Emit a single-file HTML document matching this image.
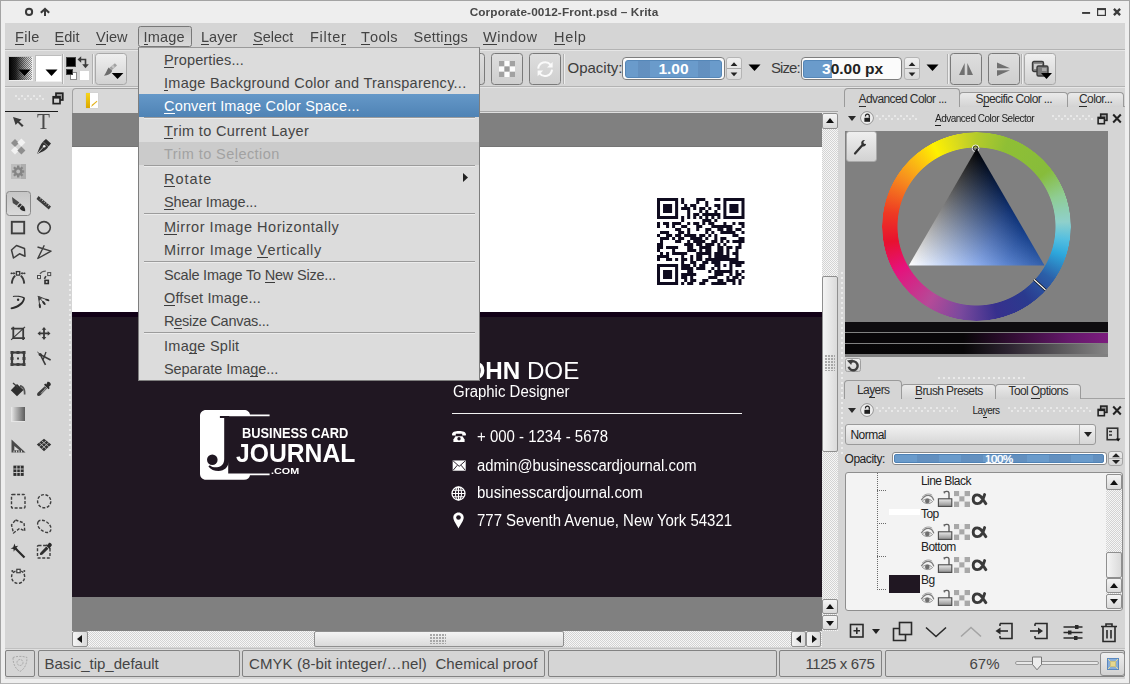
<!DOCTYPE html>
<html>
<head>
<meta charset="utf-8">
<title>Krita</title>
<style>
*{box-sizing:border-box;margin:0;padding:0}
html,body{width:1130px;height:684px;overflow:hidden;background:#eeeeee}
body{font-family:"Liberation Sans",sans-serif;font-size:14.5px;color:#3a3a3a;position:relative}
.a{position:absolute}
#win{position:absolute;left:0;top:0;width:1130px;height:684px;background:#eeeeee;border:1px solid #a3a3a3;border-bottom-color:#b5b5b5}
#main{position:absolute;left:5px;top:23px;width:1120px;height:656px;background:#d5d5d5}
.title{position:absolute;left:-1px;top:5px;width:1130px;text-align:center;font-weight:bold;font-size:11.8px;color:#484848;letter-spacing:0.12px;will-change:transform}
.mi{position:absolute;top:28px;height:18px;line-height:18px;font-size:14.5px;color:#444;white-space:nowrap}
u{text-decoration:none;border-bottom:1px solid #3c3c3c;display:inline-block;line-height:14px}
.hl{position:absolute;left:5px;width:1120px;height:1px}
.btn{position:absolute;border:1px solid #7a7a7a;border-radius:3.5px;background:linear-gradient(#dedede,#cfcfcf)}
.btn.lt{border-color:#a9a9a9;background:linear-gradient(#efefef,#d2d2d2)}
.pm{position:absolute;left:164px;height:23px;line-height:25px;font-size:14.5px;color:#3a3a3a;white-space:nowrap}
.sep{position:absolute;left:144px;width:331px;height:2px;border-top:1px solid #9c9c9c;border-bottom:1px solid #ececec}
.sbox{position:absolute;top:650px;height:27px;border:1px solid #828282;border-radius:2px;font-size:15px;line-height:25px;color:#444;white-space:nowrap}
.tab{position:absolute;font-size:12px;color:#2e2e2e;white-space:nowrap;letter-spacing:-0.6px}
.tabbox{position:absolute;border:1px solid #9a9a9a;border-bottom:none;border-radius:4px 4px 0 0;background:linear-gradient(#eaeaea,#d3d3d3)}
.tabbox.act{background:#d5d5d5;border-color:#9a9a9a}
.sb{position:absolute;border:1px solid #8f8f8f;border-radius:2px;background:linear-gradient(90deg,#f4f4f4,#dadada)}
.sbh{position:absolute;border:1px solid #8f8f8f;border-radius:2px;background:linear-gradient(#f4f4f4,#dadada)}
.track{position:absolute;background-color:#f6f6f6;background-image:linear-gradient(45deg,#d3d3d3 25%,transparent 25%,transparent 75%,#d3d3d3 75%),linear-gradient(45deg,#d3d3d3 25%,transparent 25%,transparent 75%,#d3d3d3 75%);background-size:2px 2px;background-position:0 0,1px 1px}
.card{font-family:"Liberation Sans",sans-serif;color:#fff;position:absolute;white-space:nowrap}
.lname{position:absolute;left:921px;font-size:12px;color:#222;letter-spacing:-0.55px;white-space:nowrap}
</style>
</head>
<body>
<div id="win"></div>
<div id="main"></div>

<!-- TITLE BAR -->
<div class="title">Corporate-0012-Front.psd – Krita</div>
<svg class="a" style="left:22px;top:6px" width="30" height="12" viewBox="0 0 30 12"><circle cx="7.05" cy="5.95" r="3.1" fill="none" stroke="#3a3a3a" stroke-width="2"/><path d="M23 10V3.2" fill="none" stroke="#3a3a3a" stroke-width="2"/><path d="M19.6 6L23 2.9L26.4 6" fill="none" stroke="#3a3a3a" stroke-width="2.1" stroke-linecap="square"/></svg>
<svg class="a" style="left:1080px;top:6px" width="44" height="12" viewBox="0 0 44 12"><rect x="2.1" y="6" width="8" height="1.9" fill="#3a3a3a"/><rect x="17.6" y="3" width="7.8" height="6.4" fill="none" stroke="#3a3a3a" stroke-width="1.2"/><rect x="17" y="2.1" width="9" height="2" fill="#3a3a3a"/><path d="M33.9 2.9L40.1 9.1M40.1 2.9L33.9 9.1" stroke="#3a3a3a" stroke-width="2.3"/></svg>

<!-- MENUBAR -->
<div class="btn" style="left:138px;top:26px;width:54px;height:21px;border-radius:2.5px;border-color:#787878;background:linear-gradient(#c6c6c6,#d9d9d9)"></div>
<div class="mi" style="left:15px;letter-spacing:0.3px"><u>F</u>ile</div>
<div class="mi" style="left:54.5px"><u>E</u>dit</div>
<div class="mi" style="left:96px"><u>V</u>iew</div>
<div class="mi" style="left:143.6px;letter-spacing:0.15px"><u>I</u>mage</div>
<div class="mi" style="left:201px"><u>L</u>ayer</div>
<div class="mi" style="left:253px"><u>S</u>elect</div>
<div class="mi" style="left:310px;letter-spacing:0.7px">Filte<u>r</u></div>
<div class="mi" style="left:361px;letter-spacing:0.25px"><u>T</u>ools</div>
<div class="mi" style="left:413.5px;letter-spacing:0.27px">Setti<u>n</u>gs</div>
<div class="mi" style="left:483px;letter-spacing:0.5px"><u>W</u>indow</div>
<div class="mi" style="left:554px;letter-spacing:0.7px"><u>H</u>elp</div>
<div class="hl" style="top:49px;background:#b3b3b3"></div>
<div class="hl" style="top:50px;background:#e6e6e6"></div>

<!-- TOOLBAR -->
<div id="toolbar">
<!-- gradient swatch -->
<div class="a" style="left:8px;top:56px;width:25px;height:25px;border:1px solid #c4c4c4;border-bottom-color:#eee;border-right-color:#eee"></div>
<div class="a" style="left:9px;top:57px;width:23px;height:23px;background-color:#fff;background-image:linear-gradient(45deg,#9a9a9a 25%,transparent 25%,transparent 75%,#9a9a9a 75%),linear-gradient(45deg,#9a9a9a 25%,transparent 25%,transparent 75%,#9a9a9a 75%);background-size:2px 2px;background-position:0 0,1px 1px"></div>
<div class="a" style="left:9px;top:57px;width:23px;height:23px;background:linear-gradient(90deg,#000 0%,rgba(0,0,0,.85) 30%,rgba(0,0,0,.35) 70%,rgba(0,0,0,0.05) 100%)"></div>
<svg class="a" style="left:18px;top:69px" width="13" height="8"><path d="M0.5 0.5H12.5L6.5 7z" fill="#000"/></svg>
<!-- white swatch -->
<div class="a" style="left:35px;top:55px;width:27px;height:27px;border:1px solid #bdbdbd;border-bottom-color:#eee;border-right-color:#eee;background:#fff"></div>
<svg class="a" style="left:45px;top:69px" width="13" height="8"><path d="M0.5 0.5H12.5L6.5 7z" fill="#000"/></svg>
<div class="a" style="left:62px;top:54px;width:2px;height:30px;border-left:1px solid #b0b0b0;border-right:1px solid #ededed"></div>
<!-- fg/bg -->
<div class="a" style="left:79.3px;top:70.4px;width:11.2px;height:10.8px;background:#fff;border:1px solid #d4d4d4"></div>
<div class="a" style="left:65.6px;top:57px;width:10.7px;height:10.4px;background:#000;border:1px solid #444"></div>
<div class="a" style="left:69.5px;top:72px;width:7px;height:7.5px;background:#fff;border:1px solid #8a8a8a"></div>
<div class="a" style="left:66px;top:68.6px;width:6.6px;height:6.9px;background:#000;border:1px solid #444"></div>
<svg class="a" style="left:77px;top:55px" width="14" height="14" viewBox="0 0 14 14"><path d="M3 4.5H8.5V10" fill="none" stroke="#3a3a3a" stroke-width="1.6"/><path d="M0.5 4.5L4.2 1.2V7.8z" fill="#3a3a3a"/><path d="M8.5 13.2L5.2 9.3H11.8z" fill="#3a3a3a"/></svg>
<div class="a" style="left:92px;top:54px;width:2px;height:30px;border-left:1px solid #b0b0b0;border-right:1px solid #ededed"></div>
<!-- brush preset button -->
<div class="btn lt" style="left:95px;top:53px;width:32px;height:32px"></div>
<svg class="a" style="left:102px;top:62px" width="24" height="18" viewBox="0 0 24 18"><path d="M8.6 7L14 2.4" stroke="#a2a2a2" stroke-width="3.2"/><path d="M10.2 5.6L12 4.1" stroke="#c4c4c4" stroke-width="3.2"/><path d="M6.6 5.6L10.2 8.8C9.2 11.8 6 13.6 2 13.8C4 11.6 4.8 8 6.6 5.6z" fill="#6c6c6c"/><path d="M9.7 10.9H21.4L15.55 17.1z" fill="#000"/></svg>
<!-- hidden button edge -->
<div class="btn" style="left:454px;top:53px;width:31px;height:32px"></div>
<!-- checker btn -->
<div class="btn" style="left:491px;top:53px;width:32px;height:32px"></div>
<svg class="a" style="left:499px;top:61px" width="16" height="16" viewBox="0 0 16 16"><rect width="16" height="16" fill="#fdfdfd"/><g fill="#a2a2a2"><rect x="0" y="0" width="5.33" height="5.33"/><rect x="10.67" y="0" width="5.33" height="5.33"/><rect x="5.33" y="5.33" width="5.34" height="5.34" fill="#9c9c9c"/><rect x="0" y="10.67" width="5.33" height="5.33"/><rect x="10.67" y="10.67" width="5.33" height="5.33"/></g></svg>
<!-- reload btn -->
<div class="btn" style="left:529px;top:53px;width:32px;height:32px"></div>
<svg class="a" style="left:536px;top:60px" width="18" height="18" viewBox="0 0 18 18"><path d="M2.2 8.6A7 7 0 0 1 14.6 4.8" fill="none" stroke="#fafafa" stroke-width="2"/><path d="M16 9.6A7 7 0 0 1 3.6 13.4" fill="none" stroke="#fafafa" stroke-width="2"/><path d="M16.6 2V7.6H11z" fill="#fafafa"/><path d="M1.6 16.2V10.6H7.2z" fill="#fafafa"/></svg>
<div class="a" style="left:563px;top:54px;width:2px;height:30px;border-left:1px solid #b0b0b0;border-right:1px solid #ededed"></div>
<!-- opacity -->
<div class="a" style="left:567.5px;top:59px;font-size:15px;line-height:18px;color:#3c3c3c;white-space:nowrap" id="oplab">Opacity:</div>
<div class="a" style="left:622px;top:57px;width:103px;height:23px;border:1px solid #7e7e7e;border-radius:4px;background:#fbfbfb"></div>
<div class="a" style="left:625px;top:60px;width:97px;height:18px;border-radius:3px;background:#6a9bcb;border:1px solid #5587b8;background-image:linear-gradient(90deg,rgba(255,255,255,0) 0 12px,rgba(0,0,40,.07) 12px 24px,rgba(255,255,255,0) 24px 72px,rgba(0,0,40,.07) 72px 84px,rgba(255,255,255,0) 84px)"></div>
<div class="a" style="left:625px;top:60px;width:97px;height:18px;line-height:18px;text-align:center;color:#fff;font-weight:bold;font-size:15.5px">1.00</div>
<div class="a" style="left:726px;top:57px;width:16px;height:23px;border:1px solid #b4b4b4;border-radius:3px;background:linear-gradient(#efefef,#dadada)"></div>
<div class="a" style="left:727px;top:68px;width:14px;height:1px;background:#a8a8a8"></div>
<svg class="a" style="left:729px;top:60px" width="10" height="18" viewBox="0 0 10 18"><path d="M1.6 6L5 2.2L8.4 6z" fill="#222"/><path d="M1.6 12.4L5 16.2L8.4 12.4z" fill="#222"/></svg>
<svg class="a" style="left:748px;top:64px" width="13" height="8"><path d="M0.5 0.5H12.5L6.5 7z" fill="#000"/></svg>
<!-- size -->
<div class="a" style="left:771px;top:59px;font-size:15px;line-height:18px;color:#3c3c3c;white-space:nowrap;letter-spacing:-0.95px" id="szlab">Size:</div>
<div class="a" style="left:800.5px;top:57px;width:101.5px;height:23px;border:1px solid #7e7e7e;border-radius:4px;background:#fbfbfb"></div>
<div class="a" style="left:803px;top:60px;width:29px;height:18px;border-radius:3px 0 0 3px;background:#6a9bcb;border:1px solid #5587b8;border-right:none"></div>
<div class="a" style="left:822px;top:60px;width:70px;height:18px;line-height:18px;color:#222;font-weight:bold;font-size:15.5px;white-space:nowrap"><span style="color:#fff">3</span>0.00 px</div>
<div class="a" style="left:904px;top:57px;width:16px;height:23px;border:1px solid #b4b4b4;border-radius:3px;background:linear-gradient(#efefef,#dadada)"></div>
<div class="a" style="left:905px;top:68px;width:14px;height:1px;background:#a8a8a8"></div>
<svg class="a" style="left:907px;top:60px" width="10" height="18" viewBox="0 0 10 18"><path d="M1.6 6L5 2.2L8.4 6z" fill="#222"/><path d="M1.6 12.4L5 16.2L8.4 12.4z" fill="#222"/></svg>
<svg class="a" style="left:926px;top:64px" width="13" height="8"><path d="M0.5 0.5H12.5L6.5 7z" fill="#000"/></svg>
<div class="a" style="left:947px;top:54px;width:2px;height:30px;border-left:1px solid #b0b0b0;border-right:1px solid #ededed"></div>
<!-- mirror buttons -->
<div class="btn" style="left:950px;top:53px;width:32px;height:32px"></div>
<svg class="a" style="left:958px;top:62px" width="16" height="14" viewBox="0 0 16 14"><path d="M1 13L6.7 13L6.7 1z" fill="#707070"/><path d="M15 13L9.3 13L9.3 1z" fill="#707070"/></svg>
<div class="btn" style="left:988px;top:53px;width:32px;height:32px"></div>
<svg class="a" style="left:996px;top:62px" width="15" height="15" viewBox="0 0 15 15"><path d="M1 0.5L14 6.3L1 6.3z" fill="#707070"/><path d="M1 14L14 8.3L1 8.3z" fill="#707070"/></svg>
<div class="a" style="left:1021px;top:54px;width:2px;height:30px;border-left:1px solid #b0b0b0;border-right:1px solid #ededed"></div>
<div class="btn lt" style="left:1024px;top:53px;width:32px;height:32px"></div>
<svg class="a" style="left:1031px;top:60px" width="22" height="20" viewBox="0 0 22 20"><rect x="1.5" y="1.5" width="11" height="10" rx="1.5" fill="#8a8a8a" stroke="#3c3c3c" stroke-width="1.4"/><rect x="3" y="4" width="8" height="5" fill="#cfcfcf"/><rect x="6" y="6" width="11" height="10" rx="1.5" fill="#7c7c7c" stroke="#3c3c3c" stroke-width="1.4"/><rect x="11" y="8" width="4.5" height="3" fill="#a9a9a9"/><path d="M10 13H21L15.5 19z" fill="#000"/></svg>
</div>
<div class="hl" style="top:86px;background:#b3b3b3"></div>
<div class="hl" style="top:87px;background:#e6e6e6"></div>

<!-- TOOLBOX -->
<div id="toolbox">
<div class="a" style="left:14.5px;top:95px;width:30px;height:6px;background-image:radial-gradient(circle at 1.1px 1.1px,#e8e8e8 .9px,transparent 1.25px),radial-gradient(circle at 1.1px 1.1px,#e8e8e8 .9px,transparent 1.25px);background-size:6px 6px;background-position:0 0,3px 3px"></div>
<svg class="a" style="left:52px;top:92px" width="12" height="13" viewBox="0 0 12 13"><rect x="4" y="1.2" width="6.8" height="6.8" fill="#9a9a9a" stroke="#222" stroke-width="1.7"/><rect x="1.2" y="4.8" width="6.8" height="6.8" fill="#d6d6d6" stroke="#222" stroke-width="1.7"/><rect x="1.2" y="5" width="6.8" height="1.6" fill="#222"/></svg>
<div class="a" style="left:5px;top:111px;width:53px;height:1px;background:#1a1a1a"></div>
<div class="a" style="left:68.5px;top:274px;width:2px;height:182px;background-image:linear-gradient(#f2f2f2 0 2px,transparent 2px 5px);background-size:2px 5px;opacity:.75"></div>
<svg class="a" style="left:12px;top:116px" width="13" height="12" viewBox="0 0 13 12"><path d="M1 1L9.6 3.4L7.2 5.4L11.6 9.4L10 11L5.8 6.8L3.6 9z" fill="#3a3a3a"/></svg>
<div class="a" style="left:37.3px;top:109px;font-family:'Liberation Serif',serif;font-size:23px;line-height:26px;color:#4a4a4a;transform-origin:0 0;transform:scaleX(.92)">T</div>
<svg class="a" style="left:10px;top:138px" width="16" height="17" viewBox="0 0 16 17"><path d="M5 1L9 5L5 9L1 5z" fill="#8e8e8e"/><path d="M11.4 0.6L15.4 4.6L11.4 8.6L7.4 4.6z" fill="#f2f2f2"/><path d="M5 8.4L9 12.4L5 16.4L1 12.4z" fill="#f2f2f2"/><path d="M11.4 8.4L15.4 12.4L11.4 16.4L7.4 12.4z" fill="#8e8e8e"/></svg>
<svg class="a" style="left:36px;top:138px" width="16" height="17" viewBox="0 0 16 17"><path d="M10 1L15 5.5L12.5 8.5L7 3.5z" fill="#2e2e2e"/><path d="M7 3.8L12.2 8.7C10.5 12 6 14.2 1 16C3 11 4.2 6.5 7 3.8z" fill="#333"/><circle cx="8.2" cy="8.3" r="1.3" fill="#eee"/><path d="M1.5 15.5L7.4 9.1" stroke="#eee" stroke-width=".8"/></svg>
<svg class="a" style="left:11px;top:164px" width="15" height="15" viewBox="0 0 15 15"><rect width="15" height="15" fill="#bebebe"/><rect x="10" width="5" height="15" fill="#aeaeae"/><g transform="translate(7.2 7.5)" fill="#858585"><circle r="4.3"/><g><rect x="-1.2" y="-6" width="2.4" height="12"/><rect x="-1.2" y="-6" width="2.4" height="12" transform="rotate(45)"/><rect x="-1.2" y="-6" width="2.4" height="12" transform="rotate(90)"/><rect x="-1.2" y="-6" width="2.4" height="12" transform="rotate(135)"/></g><circle r="1.9" fill="#bebebe"/></g></svg>
<div class="btn" style="left:6px;top:191px;width:25px;height:25px;border-color:#8a8a8a;background:linear-gradient(#c6c6c6,#dadada)"></div>
<svg class="a" style="left:11px;top:196px" width="15" height="16" viewBox="0 0 15 16"><path d="M1 1L1.8 7L5.6 9.6L8.4 6.6z" fill="#4a4a4a"/><path d="M6.2 10.2L9 7.2L10.8 8.8L8 11.8z" fill="#333"/><path d="M8.6 12.2L11.2 9.3C13.2 10.3 14.4 12.5 14.2 15.2C11.8 15.2 9.6 14.2 8.6 12.2z" fill="#2a2a2a"/></svg>
<svg class="a" style="left:36px;top:195px" width="16" height="16" viewBox="0 0 16 16"><path d="M2.5 1L15 11.5L12.8 14.5L0.5 4z" fill="#3a3a3a"/><path d="M4 4.5l1-1.3M6 6.2l1-1.3M8 7.9l1-1.3M10 9.6l1-1.3M12 11.3l1-1.3" stroke="#bbb" stroke-width=".9"/></svg>
<svg class="a" style="left:10px;top:220px" width="16" height="16" viewBox="0 0 16 16"><rect x="1.8" y="1.8" width="12.4" height="11.6" fill="none" stroke="#3e3e3e" stroke-width="1.9"/></svg>
<svg class="a" style="left:36px;top:220px" width="16" height="16" viewBox="0 0 16 16"><ellipse cx="8" cy="7.6" rx="6.3" ry="6" fill="none" stroke="#3e3e3e" stroke-width="1.6"/></svg>
<svg class="a" style="left:10px;top:244px" width="17" height="16" viewBox="0 0 17 16"><path d="M6.5 1.5L14.5 4.5L15 12.2L9.5 9.8L3.5 14L1.5 6z" fill="none" stroke="#3e3e3e" stroke-width="1.5" stroke-linejoin="round"/></svg>
<svg class="a" style="left:36px;top:244px" width="16" height="16" viewBox="0 0 16 16"><path d="M1.5 3L15 7.2L1.8 14.5L8.3 1.2" fill="none" stroke="#3e3e3e" stroke-width="1.4" stroke-linejoin="round"/></svg>
<svg class="a" style="left:10px;top:270px" width="16" height="15" viewBox="0 0 16 15"><path d="M1.8 13.6C2.1 10 3.2 7.4 5.2 5.8" fill="none" stroke="#3a3a3a" stroke-width="1.9"/><path d="M14.2 13.6C13.9 10 12.8 7.4 10.8 5.8" fill="none" stroke="#3a3a3a" stroke-width="1.9"/><rect x="6.4" y="1.6" width="3.3" height="3.5" fill="#dcdcdc" stroke="#3a3a3a" stroke-width="1.3"/><path d="M1.2 3.3H4" stroke="#3a3a3a" stroke-width="1"/><path d="M5.7 3.3L3.5 1.9V4.7z" fill="#3a3a3a"/><path d="M14.8 3.3H12" stroke="#3a3a3a" stroke-width="1"/><path d="M10.3 3.3L12.5 1.9V4.7z" fill="#3a3a3a"/><circle cx="1.4" cy="3.3" r=".9" fill="#3a3a3a"/><circle cx="14.6" cy="3.3" r=".9" fill="#3a3a3a"/></svg>
<svg class="a" style="left:36px;top:270px" width="16" height="15" viewBox="0 0 16 15"><path d="M4 3.8C5.4 1.9 7.4 1 9.8 1.1" fill="none" stroke="#5a5a5a" stroke-width="1.3"/><path d="M9.9 6.1L8.4 8.9" stroke="#3a3a3a" stroke-width="1.6"/><rect x="1.5" y="5.5" width="3" height="3.1" fill="#dedede" stroke="#4a4a4a" stroke-width="1"/><rect x="11.7" y="2.6" width="3" height="3" fill="#dedede" stroke="#4a4a4a" stroke-width="1"/><rect x="9" y="10.4" width="3.3" height="3.1" fill="#e8e8e8" stroke="#2e2e2e" stroke-width="1.6"/></svg>
<svg class="a" style="left:10px;top:295px" width="17" height="15" viewBox="0 0 17 15"><path d="M1 12.4C6 11.4 12.4 8.2 13.3 3.2C10.5 1.9 6.4 1.6 3 1.9L2.9 1C7 0.5 12 0.8 15 2.7C14.8 9 8 13.4 1.7 14.2C0.5 14.2 0.3 12.8 1 12.4z" fill="#2c2c2c"/><circle cx="8.1" cy="4.7" r="1.2" fill="#2c2c2c"/></svg>
<svg class="a" style="left:36px;top:295px" width="16" height="15" viewBox="0 0 16 15"><path d="M1.6 0.8L6.4 2.6L3 6z" fill="#3a3a3a"/><path d="M2.4 1.6L12.8 5.3M2.4 1.6L9 9.2M2.4 1.6L4 12.5" stroke="#4a4a4a" stroke-width="1"/><ellipse cx="11.3" cy="4.9" rx="2.2" ry="1" transform="rotate(20 11.3 4.9)" fill="#2c2c2c"/><ellipse cx="7.9" cy="8" rx="2.3" ry="1.05" transform="rotate(49 7.9 8)" fill="#2c2c2c"/><ellipse cx="3.8" cy="10.9" rx="2.4" ry="1.05" transform="rotate(82 3.8 10.9)" fill="#2c2c2c"/></svg>
<svg class="a" style="left:10px;top:325px" width="17" height="17" viewBox="0 0 17 17"><path d="M1.1 3.6H13.2V14.9M3.3 1.8V13.1H15" fill="none" stroke="#3a3a3a" stroke-width="1.8"/><path d="M15 1.8L1.1 14.9" stroke="#3a3a3a" stroke-width="1.1"/></svg>
<svg class="a" style="left:36px;top:326px" width="16" height="15" viewBox="0 0 16 15"><path d="M8 2.5V12.3M3.2 7.4H12.8" stroke="#3a3a3a" stroke-width="1.8"/><path d="M8 0.9L10.3 3.7H5.7zM8 13.9L10.3 11.1H5.7zM1.5 7.4L4.3 5.1V9.7zM14.5 7.4L11.7 5.1V9.7z" fill="#3a3a3a"/></svg>
<svg class="a" style="left:10px;top:350px" width="16" height="17" viewBox="0 0 16 17"><rect x="2" y="2.5" width="12" height="12" fill="none" stroke="#3e3e3e" stroke-width="2.2"/><g fill="#3e3e3e"><rect x="0.5" y="1" width="3" height="3"/><rect x="12.5" y="1" width="3" height="3"/><rect x="0.5" y="13" width="3" height="3"/><rect x="12.5" y="13" width="3" height="3"/><rect x="6.5" y="1" width="3" height="3"/><rect x="6.5" y="13" width="3" height="3"/><rect x="0.5" y="7" width="3" height="3"/><rect x="12.5" y="7" width="3" height="3"/><rect x="7" y="7.5" width="2" height="2"/></g></svg>
<svg class="a" style="left:36px;top:350px" width="16" height="16" viewBox="0 0 16 16"><path d="M1.4 2L4.2 4.5" stroke="#3a3a3a" stroke-width="1"/><path d="M4.2 4.5L14.6 10" stroke="#3a3a3a" stroke-width="1.6"/><path d="M4.2 4.5L9.5 14.8" stroke="#3a3a3a" stroke-width="1.6"/><path d="M10 2.1L7.2 9.4" stroke="#3a3a3a" stroke-width="1.3"/><circle cx="4.2" cy="4.5" r="1.6" fill="#3a3a3a"/></svg>
<svg class="a" style="left:10px;top:381px" width="17" height="16" viewBox="0 0 17 16"><path d="M7 3L13.5 9L7 15.2L0.8 9.2z" fill="#2e2e2e"/><path d="M3 2L8 6.5" stroke="#3e3e3e" stroke-width="1.3"/><path d="M10 4C14 4.5 15.8 8 15.5 13.5L13.8 13.5C14 9 13 6.8 10 6z" fill="#555"/></svg>
<svg class="a" style="left:36px;top:381px" width="16" height="16" viewBox="0 0 16 16"><path d="M11.5 0.8C13 0.2 15.2 2 14.8 4L12.8 6L13.8 7L12.5 8.3L8 3.8L9.3 2.5L10.3 3.5z" fill="#2a2a2a"/><path d="M8.8 5.2L11 7.4L4.5 14.2C3.5 15.2 1.5 15.2 1.2 14.2C0.8 13 1.5 12 2.3 11.3z" fill="#3c3c3c"/><path d="M8.5 6.8L9.5 7.8L5 12.5" stroke="#bbb" stroke-width="1" fill="none"/></svg>
<div class="a" style="left:11px;top:407.4px;width:14.2px;height:15px;background:linear-gradient(90deg,#ececec,#c4c4c4 25%,#5c5c5c);border-bottom:1px solid #e6e6e6"></div>
<svg class="a" style="left:10px;top:438px" width="17" height="16" viewBox="0 0 17 16"><path d="M1.5 1.5L15.5 14.5H1.5z" fill="#4a4a4a"/><path d="M4.3 8L9.5 12.2H4.3z" fill="#d6d6d6"/><path d="M4 14.5v-2M6.5 14.5v-2M9 14.5v-2M11.5 14.5v-2" stroke="#d6d6d6" stroke-width="1"/></svg>
<svg class="a" style="left:36px;top:438px" width="16" height="14" viewBox="0 0 16 14"><path d="M8 0.8L15.2 6.5L8 13.2L0.8 6.5z" fill="#333"/><path d="M5.6 2.7L12.8 8.7M3.2 4.6L10.4 11M10.4 2.7L3.2 8.7M12.8 4.6L5.6 11" stroke="#c8c8c8" stroke-width=".8"/></svg>
<svg class="a" style="left:12.5px;top:465px" width="11" height="12" viewBox="0 0 11 12"><rect x="0.4" y="0.6" width="10.3" height="10.3" fill="#2e2e2e"/><path d="M3.8 0.6v10.3M7.3 0.6v10.3M0.4 4h10.3M0.4 7.5h10.3" stroke="#cfcfcf" stroke-width=".9"/></svg>
<svg class="a" style="left:10px;top:493px" width="17" height="17" viewBox="0 0 17 17"><rect x="1.5" y="1.5" width="13.5" height="13.5" rx="1" fill="none" stroke="#3e3e3e" stroke-width="1.4" stroke-dasharray="3 1.6"/></svg>
<svg class="a" style="left:36px;top:493px" width="17" height="17" viewBox="0 0 17 17"><circle cx="8.2" cy="8.2" r="6.6" fill="none" stroke="#3e3e3e" stroke-width="1.4" stroke-dasharray="3 1.6"/></svg>
<svg class="a" style="left:10px;top:518px" width="17" height="17" viewBox="0 0 17 17"><path d="M5.5 2L14 5L14.8 13L9.5 10.5L3.5 15L1.5 7z" fill="none" stroke="#3e3e3e" stroke-width="1.4" stroke-dasharray="3 1.6" stroke-linejoin="round"/></svg>
<svg class="a" style="left:36px;top:518px" width="17" height="17" viewBox="0 0 17 17"><path d="M2 4C4 0.5 10 2.5 13 6C16.5 10 15 15 11 14.5C6 14 0 8.5 2 4z" fill="none" stroke="#3e3e3e" stroke-width="1.4" stroke-dasharray="3 1.6"/></svg>
<svg class="a" style="left:10px;top:543px" width="16" height="16" viewBox="0 0 16 16"><path d="M5.5 5.5L14.5 14.5" stroke="#2a2a2a" stroke-width="2.2"/><path d="M4.5 0.5L5.4 3.3L8.2 2.8L6.4 4.8L8 7L5.2 6.2L3.8 8.8L3.4 6L0.6 5.4L3.2 4.2z" fill="#2a2a2a"/></svg>
<svg class="a" style="left:36px;top:542px" width="17" height="18" viewBox="0 0 17 18"><rect x="1.5" y="3.5" width="12.5" height="12.5" rx="1" fill="none" stroke="#3e3e3e" stroke-width="1.4" stroke-dasharray="3 1.6"/><path d="M13 0.8C14.5 0.4 16.2 2 15.8 3.6L14 5.4L14.8 6.2L13.8 7.2L9.8 3.2L10.8 2.2L11.6 3z" fill="#2a2a2a"/><path d="M10.3 4.6L12.4 6.7L6.5 12.6C5.8 13.3 4.2 13.2 4 12.5C3.7 11.6 4.2 10.8 4.8 10.2z" fill="#2e2e2e"/></svg>
<svg class="a" style="left:10px;top:568px" width="17" height="17" viewBox="0 0 17 17"><path d="M5.5 3.2C2.5 4 1 7 1.8 10.5C2.6 14 6 16 9.5 15.2C13 14.4 15 11.5 14.6 8C14.3 5.5 13 4 11.2 3.2" fill="none" stroke="#3e3e3e" stroke-width="1.4" stroke-dasharray="3 1.6"/><rect x="6.8" y="1.3" width="3.4" height="3.4" fill="#e8e8e8" stroke="#3e3e3e" stroke-width="1.2"/><circle cx="2.3" cy="3" r="1" fill="#3e3e3e"/><circle cx="14.3" cy="3" r="1" fill="#3e3e3e"/></svg>
</div>

<!-- CANVAS -->
<div id="canvas">
<!-- doc tab -->
<div class="a" style="left:72px;top:88px;width:260px;height:25px;border:1px solid #a2a2a2;border-bottom:none;border-radius:4px 4px 0 0;background:#d8d8d8"></div>
<div class="a" style="left:332px;top:111px;width:506px;height:2px;background:#dedede;border-top:1px solid #a8a8a8"></div>
<div class="a" style="left:85.5px;top:92.5px;width:12.5px;height:15px;background:#fff;box-shadow:0 0 1px #bbb"></div>
<div class="a" style="left:85.5px;top:92.5px;width:4px;height:15px;background:linear-gradient(#f7d51c,#dba700)"></div>
<svg class="a" style="left:90px;top:100px" width="8" height="8"><path d="M1 7L2.2 4.6L6.8 0.8L7.4 1.6L3 5.6z" fill="#e3b21a"/></svg>
<!-- canvas bg -->
<div class="a" style="left:72px;top:113px;width:750px;height:518px;background:#808080"></div>
<div class="a" style="left:72px;top:146px;width:750px;height:1px;background:#757575"></div>
<div class="a" style="left:72px;top:147px;width:750px;height:165px;background:#fff"></div>
<div class="a" style="left:72px;top:312px;width:750px;height:285px;background:#201722"></div>
<div class="a" style="left:72px;top:312px;width:750px;height:4.8px;background:#110016"></div>
<!-- QR -->
<svg id="qr" class="a" style="left:657.2px;top:197.9px" width="87.5" height="86.9" viewBox="0 0 29 29" preserveAspectRatio="none"><path d="M0 0h7v1h-7zM8 0h1v1h-1zM13 0h3v1h-3zM19 0h2v1h-2zM22 0h7v1h-7zM0 1h1v1h-1zM6 1h1v1h-1zM8 1h1v1h-1zM13 1h1v1h-1zM16 1h1v1h-1zM22 1h1v1h-1zM28 1h1v1h-1zM0 2h1v1h-1zM2 2h3v1h-3zM6 2h1v1h-1zM9 2h1v1h-1zM11 2h2v1h-2zM16 2h1v1h-1zM19 2h2v1h-2zM22 2h1v1h-1zM24 2h3v1h-3zM28 2h1v1h-1zM0 3h1v1h-1zM2 3h3v1h-3zM6 3h1v1h-1zM8 3h3v1h-3zM12 3h1v1h-1zM14 3h2v1h-2zM17 3h1v1h-1zM20 3h1v1h-1zM22 3h1v1h-1zM24 3h3v1h-3zM28 3h1v1h-1zM0 4h1v1h-1zM2 4h3v1h-3zM6 4h1v1h-1zM10 4h1v1h-1zM14 4h1v1h-1zM16 4h1v1h-1zM19 4h1v1h-1zM22 4h1v1h-1zM24 4h3v1h-3zM28 4h1v1h-1zM0 5h1v1h-1zM6 5h1v1h-1zM10 5h1v1h-1zM12 5h2v1h-2zM15 5h6v1h-6zM22 5h1v1h-1zM28 5h1v1h-1zM0 6h7v1h-7zM8 6h1v1h-1zM10 6h1v1h-1zM12 6h1v1h-1zM14 6h1v1h-1zM16 6h1v1h-1zM18 6h1v1h-1zM20 6h1v1h-1zM22 6h7v1h-7zM8 7h1v1h-1zM15 7h3v1h-3zM19 7h1v1h-1zM0 8h1v1h-1zM2 8h2v1h-2zM5 8h3v1h-3zM10 8h1v1h-1zM12 8h2v1h-2zM15 8h1v1h-1zM17 8h2v1h-2zM22 8h1v1h-1zM25 8h1v1h-1zM27 8h2v1h-2zM0 9h1v1h-1zM3 9h1v1h-1zM5 9h1v1h-1zM8 9h2v1h-2zM13 9h2v1h-2zM18 9h7v1h-7zM28 9h1v1h-1zM6 10h2v1h-2zM10 10h1v1h-1zM13 10h1v1h-1zM16 10h2v1h-2zM20 10h2v1h-2zM23 10h2v1h-2zM26 10h2v1h-2zM1 11h3v1h-3zM7 11h2v1h-2zM10 11h1v1h-1zM16 11h1v1h-1zM18 11h1v1h-1zM21 11h5v1h-5zM28 11h1v1h-1zM0 12h1v1h-1zM3 12h2v1h-2zM6 12h2v1h-2zM9 12h4v1h-4zM14 12h2v1h-2zM17 12h1v1h-1zM19 12h1v1h-1zM25 12h2v1h-2zM1 13h3v1h-3zM5 13h1v1h-1zM7 13h2v1h-2zM11 13h4v1h-4zM16 13h1v1h-1zM19 13h1v1h-1zM21 13h2v1h-2zM27 13h2v1h-2zM1 14h1v1h-1zM6 14h2v1h-2zM10 14h1v1h-1zM12 14h4v1h-4zM18 14h2v1h-2zM21 14h1v1h-1zM23 14h1v1h-1zM25 14h4v1h-4zM0 15h2v1h-2zM9 15h3v1h-3zM13 15h2v1h-2zM16 15h3v1h-3zM20 15h1v1h-1zM22 15h1v1h-1zM27 15h1v1h-1zM0 16h2v1h-2zM3 16h4v1h-4zM10 16h2v1h-2zM14 16h4v1h-4zM20 16h2v1h-2zM23 16h2v1h-2zM26 16h2v1h-2zM0 17h1v1h-1zM5 17h1v1h-1zM10 17h3v1h-3zM14 17h1v1h-1zM16 17h2v1h-2zM20 17h2v1h-2zM23 17h1v1h-1zM26 17h1v1h-1zM1 18h1v1h-1zM3 18h1v1h-1zM5 18h5v1h-5zM13 18h5v1h-5zM19 18h3v1h-3zM23 18h1v1h-1zM25 18h2v1h-2zM0 19h4v1h-4zM8 19h1v1h-1zM11 19h1v1h-1zM13 19h2v1h-2zM17 19h1v1h-1zM19 19h5v1h-5zM26 19h1v1h-1zM0 20h1v1h-1zM3 20h2v1h-2zM6 20h1v1h-1zM8 20h2v1h-2zM11 20h1v1h-1zM13 20h2v1h-2zM16 20h11v1h-11zM8 21h1v1h-1zM11 21h2v1h-2zM15 21h2v1h-2zM18 21h3v1h-3zM24 21h5v1h-5zM0 22h7v1h-7zM8 22h3v1h-3zM12 22h1v1h-1zM14 22h2v1h-2zM19 22h2v1h-2zM22 22h1v1h-1zM24 22h1v1h-1zM26 22h2v1h-2zM0 23h1v1h-1zM6 23h1v1h-1zM8 23h4v1h-4zM13 23h3v1h-3zM18 23h1v1h-1zM20 23h1v1h-1zM24 23h1v1h-1zM0 24h1v1h-1zM2 24h3v1h-3zM6 24h1v1h-1zM10 24h2v1h-2zM17 24h1v1h-1zM19 24h6v1h-6zM26 24h1v1h-1zM28 24h1v1h-1zM0 25h1v1h-1zM2 25h3v1h-3zM6 25h1v1h-1zM8 25h5v1h-5zM19 25h3v1h-3zM24 25h1v1h-1zM26 25h2v1h-2zM0 26h1v1h-1zM2 26h3v1h-3zM6 26h1v1h-1zM8 26h2v1h-2zM11 26h1v1h-1zM17 26h3v1h-3zM23 26h1v1h-1zM25 26h2v1h-2zM28 26h1v1h-1zM0 27h1v1h-1zM6 27h1v1h-1zM9 27h1v1h-1zM11 27h2v1h-2zM15 27h2v1h-2zM20 27h2v1h-2zM23 27h3v1h-3zM27 27h1v1h-1zM0 28h7v1h-7zM8 28h1v1h-1zM10 28h2v1h-2zM14 28h2v1h-2zM18 28h5v1h-5zM25 28h1v1h-1zM27 28h1v1h-1z" fill="#0f0b1f"/></svg>
<!-- logo -->
<svg class="a" style="left:198px;top:408px" width="162" height="76" viewBox="0 0 162 76">
<path d="M8 1.9H46C49.5 1.9 51.7 4 52 6.6H71.6V8.2H30.2V65.6H71.6V67.2H52C51.7 69.8 49.5 71.7 46 71.7H8C4.5 71.7 2 69.2 2 65.7V7.9C2 4.4 4.5 1.9 8 1.9z" fill="#fff"/>
<path d="M21.9 7.9H31.2V52C30.6 59 26.5 63 20.5 63C16.3 63 12.8 61.5 10.4 58.4L11.8 57.2C13.8 58.9 16.3 59.6 19 59.3C23.5 58.8 26.2 56 26.2 51V10H21.9z" fill="#201722"/>
<circle cx="14.3" cy="51.7" r="5.3" fill="#201722"/>
</svg>
<div class="card" id="bc" style="left:241.5px;top:424px;font-weight:bold;font-size:14.6px;line-height:18px;transform-origin:0 0;transform:scaleX(.88)">BUSINESS CARD</div>
<div class="card" id="jr" style="left:236px;top:438px;font-weight:bold;font-size:25.6px;line-height:30px;transform-origin:0 0;transform:scaleX(0.965)">JOURNAL</div>
<div class="card" id="com" style="left:270.5px;top:464px;font-weight:bold;font-size:9.8px;line-height:14px;transform-origin:0 0;transform:scaleX(1.1)">.COM</div>
<!-- name -->
<div class="card" id="nm" style="left:453px;top:356px;font-size:24.6px;line-height:30px;transform-origin:0 0;transform:scaleX(0.983)"><b>JOHN</b> DOE</div>
<div class="card" id="gd" style="left:452.5px;top:382px;font-size:15.6px;line-height:20px;transform-origin:0 0;transform:scaleX(0.96)">Graphic Designer</div>
<div class="a" style="left:452px;top:413px;width:290px;height:1.4px;background:#f2f2f2"></div>
<div class="card" id="t1" style="left:476.5px;top:427px;font-size:16px;line-height:20px;transform-origin:0 0;transform:scaleX(0.936)">+ 000 - 1234 - 5678</div>
<div class="card" id="t2" style="left:476.5px;top:455.5px;font-size:16px;line-height:20px;transform-origin:0 0;transform:scaleX(0.927)">admin@businesscardjournal.com</div>
<div class="card" id="t3" style="left:476.5px;top:482.5px;font-size:16px;line-height:20px;transform-origin:0 0;transform:scaleX(0.937)">businesscardjournal.com</div>
<div class="card" id="t4" style="left:476.5px;top:510.5px;font-size:16px;line-height:20px;transform-origin:0 0;transform:scaleX(0.935)">777 Seventh Avenue, New York 54321</div>
<!-- icons -->
<svg class="a" style="left:451px;top:430px" width="16" height="13" viewBox="0 0 16 13"><path d="M1 4.8C1 2 4 1 8 1C12 1 15 2 15 4.8L14.6 5.6H11.2V3.8H4.8V5.6H1.4z" fill="#fff"/><path d="M4.5 6.2H11.5L13.6 9.5V12H2.4V9.5z" fill="#fff"/><circle cx="8" cy="8.8" r="1.7" fill="#201722"/></svg>
<svg class="a" style="left:451.7px;top:460px" width="14.4" height="11.2" viewBox="0 0 15 12"><rect x="0.5" y="0.5" width="14" height="11" fill="#fff"/><path d="M1 1L7.5 6.8L14 1M1 11L5.5 5.6M14 11L9.5 5.6" fill="none" stroke="#201722" stroke-width="1"/></svg>
<svg class="a" style="left:451px;top:485.5px" width="15" height="15" viewBox="0 0 15 15"><circle cx="7.5" cy="7.5" r="6.5" fill="none" stroke="#fff" stroke-width="1.3"/><ellipse cx="7.5" cy="7.5" rx="3" ry="6.5" fill="none" stroke="#fff" stroke-width="1.1"/><path d="M1 7.5H14M7.5 1V14M2 4.2H13M2 10.8H13" stroke="#fff" stroke-width="1.1"/></svg>
<svg class="a" style="left:453px;top:511.8px" width="11" height="16.8" viewBox="0 0 11 16.8"><path d="M5.5 0.4C8.6 0.4 10.7 2.7 10.7 5.5C10.7 8.8 7.2 12.8 5.5 16.4C3.8 12.8 0.3 8.8 0.3 5.5C0.3 2.7 2.4 0.4 5.5 0.4z" fill="#fff"/><circle cx="5.5" cy="5.5" r="2.3" fill="#201722"/></svg>
<!-- v scrollbar -->
<div class="track" style="left:822px;top:113px;width:16px;height:518px"></div>
<div class="sbh" style="left:822px;top:113px;width:16px;height:16px"></div>
<svg class="a" style="left:826px;top:117.5px" width="8" height="5"><path d="M0 5L4 0L8 5z" fill="#111"/></svg>
<div class="sb" style="left:822px;top:276px;width:16px;height:176px"></div>
<div class="a" style="left:825px;top:355px;width:10px;height:16px;background-image:radial-gradient(circle at 1px 1px,#a0a0a0 0.9px,transparent 1.1px);background-size:3px 3px;opacity:.9"></div>
<div class="sbh" style="left:822px;top:599px;width:16px;height:15px"></div>
<svg class="a" style="left:826px;top:604px" width="8" height="5"><path d="M0 5L4 0L8 5z" fill="#111"/></svg>
<div class="sbh" style="left:822px;top:615px;width:16px;height:15px"></div>
<svg class="a" style="left:826px;top:620.5px" width="8" height="5"><path d="M0 0L4 5L8 0z" fill="#111"/></svg>
<!-- h scrollbar -->
<div class="track" style="left:72px;top:631px;width:750px;height:16px"></div>
<div class="sb" style="left:72px;top:631px;width:16px;height:16px"></div>
<svg class="a" style="left:77px;top:635px" width="5" height="8"><path d="M5 0L0 4L5 8z" fill="#111"/></svg>
<div class="sbh" style="left:314px;top:631px;width:250px;height:16px"></div>
<div class="a" style="left:430px;top:634px;width:16px;height:10px;background-image:radial-gradient(circle at 1px 1px,#a0a0a0 0.9px,transparent 1.1px);background-size:3px 3px;opacity:.9"></div>
<div class="sb" style="left:791px;top:631px;width:15px;height:16px"></div>
<svg class="a" style="left:796px;top:635px" width="5" height="8"><path d="M5 0L0 4L5 8z" fill="#111"/></svg>
<div class="sb" style="left:806px;top:631px;width:15px;height:16px"></div>
<svg class="a" style="left:811.5px;top:635px" width="5" height="8"><path d="M0 0L5 4L0 8z" fill="#111"/></svg>
</div>

<!-- RIGHT DOCKS -->
<div id="docks">
<div class="a" style="left:840.5px;top:272px;width:2px;height:184px;background-image:linear-gradient(#f2f2f2 0 2px,transparent 2px 5px);background-size:2px 5px;opacity:.75"></div>
<div class="a" style="left:844px;top:106px;width:281px;height:1px;background:#a2a2a2"></div>
<div class="tabbox" style="left:959px;top:92px;width:109px;height:15px"></div>
<div class="tabbox" style="left:1067px;top:92px;width:57px;height:15px"></div>
<div class="tabbox act" style="left:844px;top:88px;width:116px;height:19px"></div>
<div class="tab" id="tb1" style="left:858.5px;top:91px;line-height:16px"><u style="border-color:#2e2e2e">A</u>dvanced Color ...</div>
<div class="tab" id="tb2" style="left:975.5px;top:91px;line-height:16px">S<u style="border-color:#2e2e2e">p</u>ecific Color ...</div>
<div class="tab" id="tb3" style="left:1079px;top:91px;line-height:16px"><u style="border-color:#2e2e2e">C</u>olor...</div>
<svg class="a" style="left:848px;top:116px" width="8" height="5" viewBox="0 0 8 5"><path d="M0 0H8L4 5z" fill="#2a2a2a"/></svg>
<svg class="a" style="left:860px;top:111px" width="14" height="14" viewBox="0 0 14 14"><circle cx="7" cy="7" r="6.3" fill="#e8e8e8" stroke="#8c8c8c" stroke-width="1"/><circle cx="7" cy="7" r="5.2" fill="none" stroke="#f6f6f6" stroke-width=".8"/><rect x="4.4" y="6.8" width="5.6" height="4" fill="#1e1e1e"/><path d="M9.3 6.8V5A1.9 1.9 0 0 0 5.5 5V5.6" fill="none" stroke="#1e1e1e" stroke-width="1.2"/></svg>
<div class="a" style="left:876px;top:115px;width:42px;height:6px;background-image:radial-gradient(circle at 1.1px 1.1px,#e8e8e8 .9px,transparent 1.25px),radial-gradient(circle at 1.1px 1.1px,#e8e8e8 .9px,transparent 1.25px);background-size:6px 6px;background-position:0 0,3px 3px"></div>
<div class="a" style="left:1052px;top:115px;width:42px;height:6px;background-image:radial-gradient(circle at 1.1px 1.1px,#e8e8e8 .9px,transparent 1.25px),radial-gradient(circle at 1.1px 1.1px,#e8e8e8 .9px,transparent 1.25px);background-size:6px 6px;background-position:0 0,3px 3px"></div>
<div class="a" id="dt108" style="left:935px;top:112px;font-size:10px;line-height:14px;letter-spacing:-0.5px;color:#1e1e1e;white-space:nowrap"><u style="border-color:#1e1e1e;line-height:13px">A</u>dvanced Color Selector</div>
<svg class="a" style="left:1096.8px;top:113px" width="11.1" height="12" viewBox="0 0 12 13"><rect x="4" y="1.2" width="6.8" height="6.8" fill="#9a9a9a" stroke="#222" stroke-width="1.7"/><rect x="1.2" y="4.8" width="6.8" height="6.8" fill="#d6d6d6" stroke="#222" stroke-width="1.7"/><rect x="1.2" y="5" width="6.8" height="1.6" fill="#222"/></svg>
<svg class="a" style="left:1112px;top:113px" width="10" height="11" viewBox="0 0 10 11"><path d="M1.2 1.5L8.8 9.5M8.8 1.5L1.2 9.5" stroke="#222" stroke-width="2"/></svg>
<div class="a" style="left:845px;top:131px;width:263px;height:226px;background:#808080"></div>
<div class="btn lt" style="left:846px;top:131px;width:31px;height:31px;border-radius:3px"></div>
<svg class="a" style="left:852px;top:138px" width="18" height="18" viewBox="0 0 18 18"><path d="M3 15.5L10.5 7" stroke="#333" stroke-width="2.2" stroke-linecap="round"/><path d="M9.2 5.2C9 3 11 1.5 13 2L11.3 4L12 5.8L14 6C14 8 12 9 10.2 8.3z" fill="#333"/></svg>
<div class="a" style="left:882.2px;top:131.8px;width:188.8px;height:188.8px;border-radius:50%;background:conic-gradient(from 0deg,#b4cb2b 0deg,#8fbf35 20deg,#87bc3b 52deg,#8fcd94 70deg,#8fd0cb 87deg,#55bfe0 98deg,#2ea8dc 108deg,#2b5fa8 125deg,#2a3a8e 145deg,#37308d 167deg,#79499d 190deg,#b54a98 212deg,#e5127c 241deg,#e8112f 260deg,#ee3a23 279deg,#f7941d 305deg,#fcc60f 320deg,#fff100 332deg,#d6d91f 348deg,#b4cb2b 360deg);-webkit-mask:radial-gradient(circle,transparent 78.6px,#000 79.4px,#000 94px,transparent 94.6px);mask:radial-gradient(circle,transparent 78.6px,#000 79.4px,#000 94px,transparent 94.6px)"></div>
<svg class="a" style="left:900px;top:140px;isolation:isolate" width="152" height="132" viewBox="900 140 152 132">
<defs>
<linearGradient id="tg1" gradientUnits="userSpaceOnUse" x1="1044.5" y1="265.5" x2="942.7" y2="206.7"><stop offset="0" stop-color="#3460ab"/><stop offset=".12" stop-color="#25509c"/><stop offset=".3" stop-color="#143c86"/><stop offset=".5" stop-color="#0d2d6c"/><stop offset=".75" stop-color="#061738"/><stop offset="1" stop-color="#000"/></linearGradient>
<linearGradient id="tg2" gradientUnits="userSpaceOnUse" x1="908.8" y1="265.5" x2="1010.5" y2="206.7"><stop offset="0" stop-color="#fff"/><stop offset="1" stop-color="#000"/></linearGradient>
</defs>
<circle cx="975.6" cy="148.3" r="3.3" fill="none" stroke="#f0f0f0" stroke-width="1"/><circle cx="975.6" cy="148.3" r="2.3" fill="none" stroke="#2a2a2a" stroke-width=".9"/>
<clipPath id="tcl"><path d="M976.6 148.5L1044.5 265.5L908.8 265.5z"/></clipPath>
<g style="isolation:isolate" clip-path="url(#tcl)">
<rect x="900" y="140" width="152" height="132" fill="url(#tg1)"/>
<rect x="900" y="140" width="152" height="132" fill="url(#tg2)" style="mix-blend-mode:plus-lighter"/>
</g>
</svg>
<svg class="a" style="left:1030px;top:275px" width="20" height="20" viewBox="0 0 20 20"><path d="M4 4.5L15.5 15" stroke="#111" stroke-width="2.6"/><path d="M4 4.5L15.5 15" stroke="#fff" stroke-width="1.1"/></svg>
<div class="a" style="left:845px;top:321.8px;width:263px;height:10px;background:#0e0c0f"></div>

<div class="a" style="left:845px;top:333px;width:263px;height:10px;background:linear-gradient(90deg,#080608 0%,#080608 45%,#350e37 65%,#64186a 85%,#7c1d7e 100%)"></div>

<div class="a" style="left:845px;top:344px;width:263px;height:10px;background:linear-gradient(90deg,#070607 0%,#080708 45%,#2c2330 62%,#5a585b 82%,#868686 100%)"></div>
<div class="btn lt" style="left:845.3px;top:357.8px;width:15.4px;height:14.6px;border-radius:2.5px;border-color:#a0a0a0"></div>
<svg class="a" style="left:846px;top:358px" width="14" height="14" viewBox="0 0 14 14"><path d="M4.4 4.2A4.5 4.5 0 1 1 2.7 8.8" fill="none" stroke="#3e3e3e" stroke-width="2.4"/><path d="M0.9 2.4L6.8 1.6L5.2 7z" fill="#3e3e3e"/></svg>
<div class="a" style="left:938px;top:376.5px;width:88px;height:2px;background-image:linear-gradient(90deg,#f2f2f2 0 2px,transparent 2px 5px);background-size:5px 2px;opacity:.75"></div>
<div class="a" style="left:844px;top:398px;width:281px;height:1px;background:#a2a2a2"></div>
<div class="tabbox" style="left:901px;top:384px;width:95px;height:15px"></div>
<div class="tabbox" style="left:995px;top:384px;width:86px;height:15px"></div>
<div class="tabbox act" style="left:844px;top:380px;width:58px;height:19px"></div>
<div class="tab" id="tb4" style="left:857px;top:382px;line-height:16px">La<u style="border-color:#2e2e2e">y</u>ers</div>
<div class="tab" id="tb5" style="left:915px;top:383px;line-height:16px"><u style="border-color:#2e2e2e">B</u>rush Presets</div>
<div class="tab" id="tb6" style="left:1008.5px;top:383px;line-height:16px">Tool <u style="border-color:#2e2e2e">O</u>ptions</div>
<svg class="a" style="left:848px;top:408px" width="8" height="5" viewBox="0 0 8 5"><path d="M0 0H8L4 5z" fill="#2a2a2a"/></svg>
<svg class="a" style="left:860px;top:403px" width="14" height="14" viewBox="0 0 14 14"><circle cx="7" cy="7" r="6.3" fill="#e8e8e8" stroke="#8c8c8c" stroke-width="1"/><circle cx="7" cy="7" r="5.2" fill="none" stroke="#f6f6f6" stroke-width=".8"/><rect x="4.4" y="6.8" width="5.6" height="4" fill="#1e1e1e"/><path d="M9.3 6.8V5A1.9 1.9 0 0 0 5.5 5V5.6" fill="none" stroke="#1e1e1e" stroke-width="1.2"/></svg>
<div class="a" style="left:876px;top:407px;width:82px;height:6px;background-image:radial-gradient(circle at 1.1px 1.1px,#e8e8e8 .9px,transparent 1.25px),radial-gradient(circle at 1.1px 1.1px,#e8e8e8 .9px,transparent 1.25px);background-size:6px 6px;background-position:0 0,3px 3px"></div>
<div class="a" style="left:1008px;top:407px;width:84px;height:6px;background-image:radial-gradient(circle at 1.1px 1.1px,#e8e8e8 .9px,transparent 1.25px),radial-gradient(circle at 1.1px 1.1px,#e8e8e8 .9px,transparent 1.25px);background-size:6px 6px;background-position:0 0,3px 3px"></div>
<div class="a" id="dt400" style="left:972.5px;top:404px;letter-spacing:-0.75px;font-size:10px;line-height:14px;letter-spacing:-0.5px;color:#1e1e1e;white-space:nowrap">La<u style="border-color:#1e1e1e;line-height:13px">y</u>ers</div>
<svg class="a" style="left:1096.8px;top:405px" width="11.1" height="12" viewBox="0 0 12 13"><rect x="4" y="1.2" width="6.8" height="6.8" fill="#9a9a9a" stroke="#222" stroke-width="1.7"/><rect x="1.2" y="4.8" width="6.8" height="6.8" fill="#d6d6d6" stroke="#222" stroke-width="1.7"/><rect x="1.2" y="5" width="6.8" height="1.6" fill="#222"/></svg>
<svg class="a" style="left:1112px;top:405px" width="10" height="11" viewBox="0 0 10 11"><path d="M1.2 1.5L8.8 9.5M8.8 1.5L1.2 9.5" stroke="#222" stroke-width="2"/></svg>
<div class="a" style="left:845px;top:424px;width:251px;height:21px;border:1px solid #9a9a9a;border-radius:3px;background:linear-gradient(#f2f2f2,#d6d6d6)"></div>
<div class="a" style="left:1079px;top:425px;width:1px;height:19px;background:#b0b0b0"></div>
<svg class="a" style="left:1083.5px;top:432px" width="8" height="5" viewBox="0 0 8 5"><path d="M0 0H8L4 5z" fill="#222"/></svg>
<div class="a" id="nrm" style="left:850.5px;top:426.5px;font-size:12px;line-height:16px;color:#222;letter-spacing:-0.55px">Normal</div>
<svg class="a" style="left:1106px;top:427px" width="15" height="15" viewBox="0 0 15 15"><rect x="1.2" y="1.2" width="10.5" height="11.5" fill="none" stroke="#333" stroke-width="1.6"/><path d="M3 4.5H6M3 8H6" stroke="#333" stroke-width="1.4"/><path d="M10 11.5H14.5L12.2 14.5z" fill="#111"/></svg>
<div class="a" id="opl" style="left:844.5px;top:450.5px;font-size:12px;line-height:16px;color:#222;letter-spacing:-0.45px">Opacity:</div>
<div class="a" style="left:891.5px;top:452px;width:215px;height:13px;border:1px solid #8a8a8a;border-radius:3px;background:#fff"></div>
<div class="a" style="left:894px;top:454px;width:210px;height:9px;border-radius:2px;background:#6a9bcb;border:1px solid #4f82b5;background-image:repeating-linear-gradient(90deg,rgba(255,255,255,0) 0 22px,rgba(0,0,40,.07) 22px 44px)"></div>
<div class="a" style="left:894px;top:451.5px;width:210px;height:14px;line-height:14px;text-align:center;color:#fff;font-size:11.5px;letter-spacing:-0.4px;text-shadow:0 0 1px #fff">100%</div>
<div class="a" style="left:1108px;top:450.5px;width:15px;height:15px;border:1px solid #a6a6a6;border-radius:3px;background:linear-gradient(#ececec,#d6d6d6)"></div>
<div class="a" style="left:1109px;top:457.5px;width:13px;height:1px;background:#b4b4b4"></div>
<svg class="a" style="left:1109.5px;top:451.5px" width="12" height="13" viewBox="0 0 12 13"><path d="M2 5.2L6 1.2L10 5.2z" fill="#222"/><path d="M2 8L6 12L10 8z" fill="#222"/></svg>
<div class="a" style="left:845px;top:472px;width:278px;height:139px;border:1px solid #8e8e8e;background:#f3f3f3;border-radius:3px"></div>
<div class="a" style="left:877px;top:473px;width:1px;height:117px;background-image:linear-gradient(#6a6a6a 50%,transparent 50%);background-size:1px 2px"></div>
<div class="a" style="left:877px;top:490px;width:10px;height:1px;background-image:linear-gradient(90deg,#6a6a6a 50%,transparent 50%);background-size:2px 1px"></div>
<div class="a" style="left:877px;top:523px;width:10px;height:1px;background-image:linear-gradient(90deg,#6a6a6a 50%,transparent 50%);background-size:2px 1px"></div>
<div class="a" style="left:877px;top:556px;width:10px;height:1px;background-image:linear-gradient(90deg,#6a6a6a 50%,transparent 50%);background-size:2px 1px"></div>
<div class="a" style="left:877px;top:589px;width:10px;height:1px;background-image:linear-gradient(90deg,#6a6a6a 50%,transparent 50%);background-size:2px 1px"></div>
<div class="lname" id="ln0" style="top:473px;line-height:16px">Line Black</div>
<div class="lname" id="ln1" style="top:506px;line-height:16px">Top</div>
<div class="lname" id="ln2" style="top:539px;line-height:16px">Bottom</div>
<div class="lname" id="ln3" style="top:572px;line-height:16px">Bg</div>
<svg class="a" style="left:920px;top:492px" width="15" height="14" viewBox="0 0 15 14"><path d="M1.3 8.2C3.5 4.6 6.5 3.2 8.6 3.4C11 3.6 13 5.6 13.8 8.4" fill="none" stroke="#7c7c7c" stroke-width="1.3"/><path d="M2.2 9.2C4.2 6.6 9.5 5.8 12.6 9.6C9.5 12.6 5 12 2.2 9.2z" fill="#e4e4e4" stroke="#8a8a8a" stroke-width=".9"/><circle cx="7.3" cy="8.9" r="2.3" fill="#6e6e6e"/><path d="M2.4 4.9C5 1.6 9.6 1.2 12.2 3.2" fill="none" stroke="#a0a0a0" stroke-width="1"/></svg>
<svg class="a" style="left:937px;top:490px" width="16" height="18" viewBox="0 0 16 18"><defs><linearGradient id="lkg" x1="0" y1="0" x2="0" y2="1"><stop offset="0" stop-color="#ececec"/><stop offset="1" stop-color="#8e8e8e"/></linearGradient></defs><path d="M12 9V3.4C12 1.6 10.6 1.2 9.4 1.4L7.2 2L7.6 3.4" fill="none" stroke="#5e5e5e" stroke-width="1.4"/><rect x="1.4" y="8.8" width="13.4" height="7.6" fill="url(#lkg)" stroke="#4a4a4a" stroke-width="1.1"/></svg>
<svg class="a" style="left:954px;top:491px" width="16" height="16" viewBox="0 0 16 16"><rect x="0.0" y="0.0" width="5.4" height="5.4" fill="#a8a8a8"/><rect x="5.3" y="0.0" width="5.4" height="5.4" fill="#f0f0f0"/><rect x="10.6" y="0.0" width="5.4" height="5.4" fill="#a8a8a8"/><rect x="0.0" y="5.3" width="5.4" height="5.4" fill="#f0f0f0"/><rect x="5.3" y="5.3" width="5.4" height="5.4" fill="#a8a8a8"/><rect x="10.6" y="5.3" width="5.4" height="5.4" fill="#f0f0f0"/><rect x="0.0" y="10.6" width="5.4" height="5.4" fill="#a8a8a8"/><rect x="5.3" y="10.6" width="5.4" height="5.4" fill="#f0f0f0"/><rect x="10.6" y="10.6" width="5.4" height="5.4" fill="#a8a8a8"/></svg>
<svg class="a" style="left:970.5px;top:492.5px" width="17" height="13" viewBox="0 0 17 13"><path d="M13.6 1.6C12 7.5 9.5 10.6 6.4 10.6C3.8 10.6 2.2 8.9 2.2 6.3C2.2 3.6 3.9 1.9 6.3 1.9C9.6 1.9 11.6 5.8 14.8 10.6" fill="none" stroke="#3a3a3a" stroke-width="2.9" stroke-linecap="round"/></svg>
<svg class="a" style="left:920px;top:525px" width="15" height="14" viewBox="0 0 15 14"><path d="M1.3 8.2C3.5 4.6 6.5 3.2 8.6 3.4C11 3.6 13 5.6 13.8 8.4" fill="none" stroke="#7c7c7c" stroke-width="1.3"/><path d="M2.2 9.2C4.2 6.6 9.5 5.8 12.6 9.6C9.5 12.6 5 12 2.2 9.2z" fill="#e4e4e4" stroke="#8a8a8a" stroke-width=".9"/><circle cx="7.3" cy="8.9" r="2.3" fill="#6e6e6e"/><path d="M2.4 4.9C5 1.6 9.6 1.2 12.2 3.2" fill="none" stroke="#a0a0a0" stroke-width="1"/></svg>
<svg class="a" style="left:937px;top:523px" width="16" height="18" viewBox="0 0 16 18"><defs><linearGradient id="lkg" x1="0" y1="0" x2="0" y2="1"><stop offset="0" stop-color="#ececec"/><stop offset="1" stop-color="#8e8e8e"/></linearGradient></defs><path d="M12 9V3.4C12 1.6 10.6 1.2 9.4 1.4L7.2 2L7.6 3.4" fill="none" stroke="#5e5e5e" stroke-width="1.4"/><rect x="1.4" y="8.8" width="13.4" height="7.6" fill="url(#lkg)" stroke="#4a4a4a" stroke-width="1.1"/></svg>
<svg class="a" style="left:954px;top:524px" width="16" height="16" viewBox="0 0 16 16"><rect x="0.0" y="0.0" width="5.4" height="5.4" fill="#a8a8a8"/><rect x="5.3" y="0.0" width="5.4" height="5.4" fill="#f0f0f0"/><rect x="10.6" y="0.0" width="5.4" height="5.4" fill="#a8a8a8"/><rect x="0.0" y="5.3" width="5.4" height="5.4" fill="#f0f0f0"/><rect x="5.3" y="5.3" width="5.4" height="5.4" fill="#a8a8a8"/><rect x="10.6" y="5.3" width="5.4" height="5.4" fill="#f0f0f0"/><rect x="0.0" y="10.6" width="5.4" height="5.4" fill="#a8a8a8"/><rect x="5.3" y="10.6" width="5.4" height="5.4" fill="#f0f0f0"/><rect x="10.6" y="10.6" width="5.4" height="5.4" fill="#a8a8a8"/></svg>
<svg class="a" style="left:970.5px;top:525.5px" width="17" height="13" viewBox="0 0 17 13"><path d="M13.6 1.6C12 7.5 9.5 10.6 6.4 10.6C3.8 10.6 2.2 8.9 2.2 6.3C2.2 3.6 3.9 1.9 6.3 1.9C9.6 1.9 11.6 5.8 14.8 10.6" fill="none" stroke="#3a3a3a" stroke-width="2.9" stroke-linecap="round"/></svg>
<svg class="a" style="left:920px;top:558px" width="15" height="14" viewBox="0 0 15 14"><path d="M1.3 8.2C3.5 4.6 6.5 3.2 8.6 3.4C11 3.6 13 5.6 13.8 8.4" fill="none" stroke="#7c7c7c" stroke-width="1.3"/><path d="M2.2 9.2C4.2 6.6 9.5 5.8 12.6 9.6C9.5 12.6 5 12 2.2 9.2z" fill="#e4e4e4" stroke="#8a8a8a" stroke-width=".9"/><circle cx="7.3" cy="8.9" r="2.3" fill="#6e6e6e"/><path d="M2.4 4.9C5 1.6 9.6 1.2 12.2 3.2" fill="none" stroke="#a0a0a0" stroke-width="1"/></svg>
<svg class="a" style="left:937px;top:556px" width="16" height="18" viewBox="0 0 16 18"><defs><linearGradient id="lkg" x1="0" y1="0" x2="0" y2="1"><stop offset="0" stop-color="#ececec"/><stop offset="1" stop-color="#8e8e8e"/></linearGradient></defs><path d="M12 9V3.4C12 1.6 10.6 1.2 9.4 1.4L7.2 2L7.6 3.4" fill="none" stroke="#5e5e5e" stroke-width="1.4"/><rect x="1.4" y="8.8" width="13.4" height="7.6" fill="url(#lkg)" stroke="#4a4a4a" stroke-width="1.1"/></svg>
<svg class="a" style="left:954px;top:557px" width="16" height="16" viewBox="0 0 16 16"><rect x="0.0" y="0.0" width="5.4" height="5.4" fill="#a8a8a8"/><rect x="5.3" y="0.0" width="5.4" height="5.4" fill="#f0f0f0"/><rect x="10.6" y="0.0" width="5.4" height="5.4" fill="#a8a8a8"/><rect x="0.0" y="5.3" width="5.4" height="5.4" fill="#f0f0f0"/><rect x="5.3" y="5.3" width="5.4" height="5.4" fill="#a8a8a8"/><rect x="10.6" y="5.3" width="5.4" height="5.4" fill="#f0f0f0"/><rect x="0.0" y="10.6" width="5.4" height="5.4" fill="#a8a8a8"/><rect x="5.3" y="10.6" width="5.4" height="5.4" fill="#f0f0f0"/><rect x="10.6" y="10.6" width="5.4" height="5.4" fill="#a8a8a8"/></svg>
<svg class="a" style="left:970.5px;top:558.5px" width="17" height="13" viewBox="0 0 17 13"><path d="M13.6 1.6C12 7.5 9.5 10.6 6.4 10.6C3.8 10.6 2.2 8.9 2.2 6.3C2.2 3.6 3.9 1.9 6.3 1.9C9.6 1.9 11.6 5.8 14.8 10.6" fill="none" stroke="#3a3a3a" stroke-width="2.9" stroke-linecap="round"/></svg>
<svg class="a" style="left:920px;top:591px" width="15" height="14" viewBox="0 0 15 14"><path d="M1.3 8.2C3.5 4.6 6.5 3.2 8.6 3.4C11 3.6 13 5.6 13.8 8.4" fill="none" stroke="#7c7c7c" stroke-width="1.3"/><path d="M2.2 9.2C4.2 6.6 9.5 5.8 12.6 9.6C9.5 12.6 5 12 2.2 9.2z" fill="#e4e4e4" stroke="#8a8a8a" stroke-width=".9"/><circle cx="7.3" cy="8.9" r="2.3" fill="#6e6e6e"/><path d="M2.4 4.9C5 1.6 9.6 1.2 12.2 3.2" fill="none" stroke="#a0a0a0" stroke-width="1"/></svg>
<svg class="a" style="left:937px;top:589px" width="16" height="18" viewBox="0 0 16 18"><defs><linearGradient id="lkg" x1="0" y1="0" x2="0" y2="1"><stop offset="0" stop-color="#ececec"/><stop offset="1" stop-color="#8e8e8e"/></linearGradient></defs><path d="M12 9V3.4C12 1.6 10.6 1.2 9.4 1.4L7.2 2L7.6 3.4" fill="none" stroke="#5e5e5e" stroke-width="1.4"/><rect x="1.4" y="8.8" width="13.4" height="7.6" fill="url(#lkg)" stroke="#4a4a4a" stroke-width="1.1"/></svg>
<svg class="a" style="left:954px;top:590px" width="16" height="16" viewBox="0 0 16 16"><rect x="0.0" y="0.0" width="5.4" height="5.4" fill="#a8a8a8"/><rect x="5.3" y="0.0" width="5.4" height="5.4" fill="#f0f0f0"/><rect x="10.6" y="0.0" width="5.4" height="5.4" fill="#a8a8a8"/><rect x="0.0" y="5.3" width="5.4" height="5.4" fill="#f0f0f0"/><rect x="5.3" y="5.3" width="5.4" height="5.4" fill="#a8a8a8"/><rect x="10.6" y="5.3" width="5.4" height="5.4" fill="#f0f0f0"/><rect x="0.0" y="10.6" width="5.4" height="5.4" fill="#a8a8a8"/><rect x="5.3" y="10.6" width="5.4" height="5.4" fill="#f0f0f0"/><rect x="10.6" y="10.6" width="5.4" height="5.4" fill="#a8a8a8"/></svg>
<svg class="a" style="left:970.5px;top:591.5px" width="17" height="13" viewBox="0 0 17 13"><path d="M13.6 1.6C12 7.5 9.5 10.6 6.4 10.6C3.8 10.6 2.2 8.9 2.2 6.3C2.2 3.6 3.9 1.9 6.3 1.9C9.6 1.9 11.6 5.8 14.8 10.6" fill="none" stroke="#3a3a3a" stroke-width="2.9" stroke-linecap="round"/></svg>
<div class="a" style="left:889px;top:509px;width:31px;height:6px;background:#fff"></div>
<div class="a" style="left:889px;top:575px;width:31px;height:18px;background:#201722"></div>
<div class="track" style="left:1106px;top:474px;width:16px;height:135px"></div>
<div class="sbh" style="left:1106px;top:474px;width:16px;height:15.5px"></div>
<svg class="a" style="left:1110px;top:479.5px" width="8" height="5" viewBox="0 0 8 5"><path d="M0 5L4 0L8 5z" fill="#111"/></svg>
<div class="sbh" style="left:1106px;top:578px;width:16px;height:15px"></div>
<svg class="a" style="left:1110px;top:583px" width="8" height="5" viewBox="0 0 8 5"><path d="M0 5L4 0L8 5z" fill="#111"/></svg>
<div class="sbh" style="left:1106px;top:594px;width:16px;height:15px"></div>
<svg class="a" style="left:1110px;top:599px" width="8" height="5" viewBox="0 0 8 5"><path d="M0 0L4 5L8 0z" fill="#111"/></svg>
<div class="sb" style="left:1106px;top:552px;width:16px;height:25.5px"></div>
<svg class="a" style="left:849px;top:622.3px" width="16" height="18" viewBox="0 0 16 18"><rect x="1.5" y="2.5" width="12.5" height="12.5" fill="none" stroke="#2a2a2a" stroke-width="1.6"/><path d="M4.5 8.8H11M7.8 5.5V12" stroke="#2a2a2a" stroke-width="1.6"/></svg>
<svg class="a" style="left:871.5px;top:629.3px" width="8" height="5" viewBox="0 0 8 5"><path d="M0 0H8L4 5z" fill="#222"/></svg>
<svg class="a" style="left:892px;top:621.3px" width="21" height="21" viewBox="0 0 21 21"><rect x="7.5" y="1.5" width="12" height="12" fill="none" stroke="#2a2a2a" stroke-width="1.6"/><path d="M7.5 7.5H1.5V19.5H13.5V13.5" fill="none" stroke="#2a2a2a" stroke-width="1.6"/></svg>
<svg class="a" style="left:925px;top:625.8px" width="22" height="12" viewBox="0 0 22 12"><path d="M1 1.5L11 10.5L21 1.5" fill="none" stroke="#2a2a2a" stroke-width="1.6"/></svg>
<svg class="a" style="left:960px;top:625.5px" width="22" height="12" viewBox="0 0 22 12"><path d="M1 10.5L11 1.5L21 10.5" fill="none" stroke="#a4a4a4" stroke-width="1.6"/></svg>
<svg class="a" style="left:994px;top:622.3px" width="20" height="19" viewBox="0 0 20 19"><path d="M6 1.5H18V16.5H6M6 1.5V4M6 14V16.5" fill="none" stroke="#2a2a2a" stroke-width="1.6"/><path d="M14 9H4" stroke="#2a2a2a" stroke-width="1.6"/><path d="M1.5 9L6.5 5.5V12.5z" fill="#2a2a2a"/></svg>
<svg class="a" style="left:1028px;top:622.3px" width="21" height="19" viewBox="0 0 21 19"><path d="M7 1.5H19V16.5H7M7 1.5V4M7 14V16.5" fill="none" stroke="#2a2a2a" stroke-width="1.6"/><path d="M2 9H12" stroke="#2a2a2a" stroke-width="1.6"/><path d="M15 9L10 5.5V12.5z" fill="#2a2a2a"/></svg>
<svg class="a" style="left:1063px;top:623.5px" width="20" height="17" viewBox="0 0 20 17"><path d="M0.5 3H19.5M0.5 8.5H19.5M0.5 14H19.5" stroke="#2a2a2a" stroke-width="1.4"/><rect x="12" y="1" width="3.5" height="4" fill="#2a2a2a"/><rect x="5" y="6.5" width="3.5" height="4" fill="#2a2a2a"/><rect x="11" y="12" width="3.5" height="4" fill="#2a2a2a"/></svg>
<svg class="a" style="left:1100px;top:621.5px" width="18" height="21" viewBox="0 0 18 21"><path d="M1 4.5H17M6 4.5V2H12V4.5" fill="none" stroke="#2a2a2a" stroke-width="1.6"/><path d="M3 4.5V19.5H15V4.5" fill="none" stroke="#2a2a2a" stroke-width="1.6"/><path d="M7 8V16.5M11 8V16.5" stroke="#2a2a2a" stroke-width="1.6"/></svg>
</div>

<div class="hl" style="top:648px;background:#c0c0c0"></div>
<div class="hl" style="top:649px;background:#e0e0e0"></div>
<!-- STATUS -->
<div id="status">
<div class="sbox" style="left:5px;width:29.5px"></div>
<svg class="a" style="left:11px;top:655px" width="18" height="18" viewBox="0 0 18 18"><path d="M2 2.5C6 1 12 1 16 2.5C16 9 13.5 14 9 16.5C4.5 14 2 9 2 2.5z" fill="none" stroke="#a9a9a9" stroke-width="1" stroke-dasharray="2 1.2"/><circle cx="9" cy="7.5" r="3" fill="none" stroke="#aaa" stroke-width="1" stroke-dasharray="2 1"/></svg>
<div class="sbox" id="s2" style="left:37.5px;width:202px;padding-left:6px">Basic_tip_default</div>
<div class="sbox" id="s3" style="left:242px;width:303px;padding-left:6px;letter-spacing:0.08px">CMYK (8-bit integer/…nel)&nbsp; Chemical proof</div>
<div class="sbox" style="left:547.5px;width:229px"></div>
<div class="sbox" id="s5" style="left:779px;width:103px;text-align:right;padding-right:6.5px;letter-spacing:-0.4px">1125 x 675</div>
<div class="sbox" style="left:884.5px;width:240px"></div>
<div class="a" id="s6" style="left:969.5px;top:651px;font-size:15px;line-height:25px;color:#444">67%</div>
<div class="a" style="left:1015px;top:661px;width:84px;height:4px;border:1px solid #9a9a9a;border-radius:2px;background:#e8e8e8"></div>
<svg class="a" style="left:1031px;top:656px" width="12" height="15" viewBox="0 0 12 15"><path d="M1.5 1H10.5V8.5L6 13.8L1.5 8.5z" fill="#ececec" stroke="#777" stroke-width="1"/></svg>
<div class="btn lt" style="left:1099.5px;top:651.5px;width:25px;height:24.5px;border-radius:3px;border-color:#8e8e8e"></div>
<svg class="a" style="left:1106.5px;top:657.5px" width="12" height="12" viewBox="0 0 12 12"><rect x="0.5" y="0.5" width="11" height="11" fill="#86aede" stroke="#5b88bd" stroke-width="1"/><rect x="3.2" y="3.2" width="5.6" height="5.6" fill="#e6d88e" stroke="#bfb060" stroke-width=".6"/><path d="M1 1L3.4 3.4M11 1L8.6 3.4M1 11L3.4 8.6M11 11L8.6 8.6" stroke="#e9dc92" stroke-width="1"/></svg>
</div>

<!-- POPUP MENU -->
<div id="popup">
<div class="a" style="left:138px;top:47px;width:342px;height:334px;background:#dcdcdc;border:1px solid #7e7e7e;border-top-color:#9a9a9a"></div>
<div class="pm" id="pm0" style="top:48px;color:#444;letter-spacing:0.13px"><u>P</u>roperties...</div>
<div class="pm" id="pm1" style="top:71px;color:#444;letter-spacing:0.26px"><u>I</u>mage Background Color and Transparency...</div>
<div class="a" style="left:139px;top:94px;width:340px;height:23px;background:linear-gradient(#6598c8,#4f83b5)"></div>
<div class="pm" id="pm2" style="top:94px;color:#fff;letter-spacing:0.17px"><u style="border-color:#fff">C</u>onvert Image Color Space...</div>
<div class="sep" style="top:117px"></div>
<div class="pm" id="pm3" style="top:119px;color:#444;letter-spacing:0.35px"><u>T</u>rim to Current Layer</div>
<div class="a" style="left:139px;top:142px;width:340px;height:23px;background:#cbcbcb"></div>
<div class="pm" id="pm4" style="top:142px;color:#a2a2a2;letter-spacing:0.44px">Trim to Se<u style="border-color:#a2a2a2">l</u>ection</div>
<div class="sep" style="top:165px"></div>
<div class="pm" id="pm5" style="top:167px;color:#444;letter-spacing:0.94px"><u>R</u>otate</div>
<div class="pm" id="pm6" style="top:190px;color:#444;letter-spacing:-0.15px"><u>S</u>hear Image...</div>
<div class="sep" style="top:213px"></div>
<div class="pm" id="pm7" style="top:215px;color:#444;letter-spacing:0.53px"><u>M</u>irror Image Horizontally</div>
<div class="pm" id="pm8" style="top:238px;color:#444;letter-spacing:0.55px">Mirror Image <u>V</u>ertically</div>
<div class="sep" style="top:261px"></div>
<div class="pm" id="pm9" style="top:263px;color:#444;letter-spacing:-0.2px">Scale Image To <u>N</u>ew Size...</div>
<div class="pm" id="pm10" style="top:286px;color:#444;letter-spacing:0.14px"><u>O</u>ffset Image...</div>
<div class="pm" id="pm11" style="top:309px;color:#444;letter-spacing:-0.28px">R<u>e</u>size Canvas...</div>
<div class="sep" style="top:332px"></div>
<div class="pm" id="pm12" style="top:334px;color:#444;letter-spacing:0.26px">Ima<u>g</u>e Split</div>
<div class="pm" id="pm13" style="top:357px;color:#444;letter-spacing:-0.07px">Separate Ima<u>g</u>e...</div>
<svg class="a" style="left:463px;top:173px" width="5" height="9"><path d="M0 0L5 4.5L0 9z" fill="#222"/></svg>
</div>

</body>
</html>
